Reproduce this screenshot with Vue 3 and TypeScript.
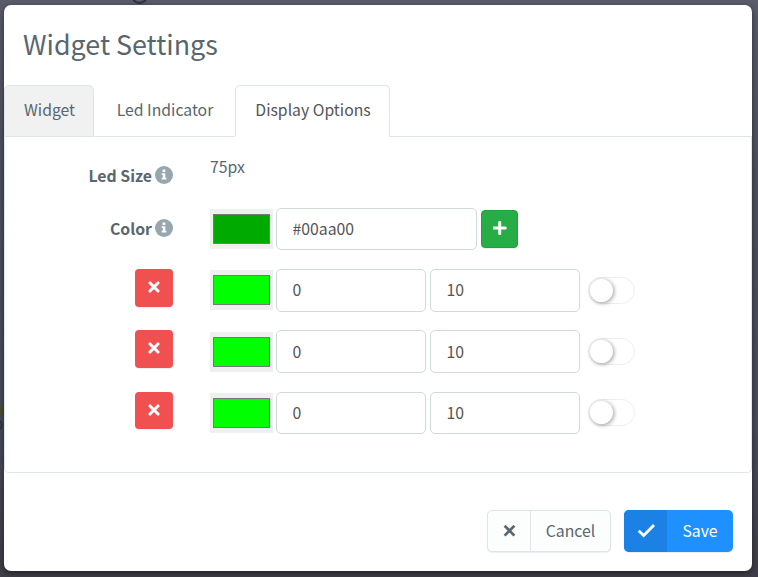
<script setup lang="ts">
import { ref } from 'vue'

interface Range {
  id: number
  color: string
  from: string
  to: string
  blink: boolean
}

const tabs = ['Widget', 'Led Indicator', 'Display Options']
const active = ref(2)
const color = ref('#00aa00')
const ranges = ref<Range[]>([
  { id: 1, color: '#00ff00', from: '0', to: '10', blink: false },
  { id: 2, color: '#00ff00', from: '0', to: '10', blink: false },
  { id: 3, color: '#00ff00', from: '0', to: '10', blink: false },
])

function addRange(): void {
  ranges.value.push({ id: Date.now(), color: '#00ff00', from: '0', to: '10', blink: false })
}

function removeRange(id: number): void {
  ranges.value = ranges.value.filter((r) => r.id !== id)
}
</script>

<template>
  <div class="backdrop">
    <span class="ghost-ring"></span>
    <span class="ghost-bar"></span>
    <span class="ghost-zero">0</span>
    <section class="modal">
      <h1 class="title">Widget Settings</h1>
      <nav class="tabs">
        <a
          v-for="(tab, i) in tabs"
          :key="tab"
          class="tab"
          :class="{ active: i === active, hovered: i === 0 }"
          @click="active = i"
        >{{ tab }}</a>
        <span class="tabs-rest"></span>
      </nav>
      <div class="panel">
        <div class="row row-size">
          <label class="label">
            <span class="label-text">Led Size</span>
            <svg class="info" viewBox="0 0 18 18">
              <circle cx="9" cy="9" r="9" fill="#98a6ad" />
              <path fill="#fff" d="M7.6 3.6h2.7v2.3H7.6zM6.7 7.2h3.6v4.5h1.1v1.9H6.7v-1.9h1.1V9H6.7z" />
            </svg>
          </label>
          <span class="value">75px</span>
        </div>
        <div class="row row-color">
          <label class="label">
            <span class="label-text">Color</span>
            <svg class="info" viewBox="0 0 18 18">
              <circle cx="9" cy="9" r="9" fill="#98a6ad" />
              <path fill="#fff" d="M7.6 3.6h2.7v2.3H7.6zM6.7 7.2h3.6v4.5h1.1v1.9H6.7v-1.9h1.1V9H6.7z" />
            </svg>
          </label>
          <div class="swatch"><span class="chip" :style="{ backgroundColor: color }"></span></div>
          <input v-model="color" class="field wide" type="text" />
          <button class="square add" @click="addRange">
            <svg width="14" height="14" viewBox="0 0 14 14">
              <path d="M6.7 1.4v11.2M1.1 7h11.2" stroke="#fff" stroke-width="3" stroke-linecap="round" />
            </svg>
          </button>
        </div>
        <div v-for="range in ranges" :key="range.id" class="row row-range">
          <div class="remove-cell">
            <button class="square remove" @click="removeRange(range.id)">
              <svg width="12" height="12" viewBox="0 0 12 12">
                <path d="M2 2l8 8M10 2l-8 8" stroke="#fff" stroke-width="3.1" stroke-linecap="round" />
              </svg>
            </button>
          </div>
          <div class="swatch"><span class="chip" :style="{ backgroundColor: range.color }"></span></div>
          <input v-model="range.from" class="field" type="text" />
          <input v-model="range.to" class="field" type="text" />
          <button class="toggle" :class="{ on: range.blink }" @click="range.blink = !range.blink">
            <span class="knob"></span>
          </button>
        </div>
      </div>
      <footer class="footer">
        <button class="action cancel">
          <span class="action-icon">
            <svg width="13" height="12" viewBox="0 0 13 12">
              <path d="M1.6 .8l9.8 9.8M11.4 .8l-9.8 9.8" stroke="#58666e" stroke-width="2.7" />
            </svg>
          </span>
          <span class="action-text">Cancel</span>
        </button>
        <button class="action save">
          <span class="action-icon">
            <svg width="18" height="14" viewBox="0 0 18 14">
              <path d="M1.7 6.8l5 4.7L17 1" fill="none" stroke="#fff" stroke-width="2.8" />
            </svg>
          </span>
          <span class="action-text">Save</span>
        </button>
      </footer>
    </section>
  </div>
</template>

<style>
body {
  margin: 0;
  overflow: hidden;
}
</style>

<style scoped>
.backdrop {
  position: relative;
  box-sizing: border-box;
  width: 758px;
  height: 577px;
  padding: 5px 6px 6px 4px;
  overflow: hidden;
  background: linear-gradient(#5b5c6b 0, #4d505f 30%, #484b59 75%, #403e48 100%);
  font-family: 'Noto Sans CJK SC', 'Noto Sans', sans-serif;
  color: #58666e;
}
.ghost-ring {
  position: absolute;
  left: 131px;
  top: -13px;
  width: 13px;
  height: 13px;
  border: 2px solid #30323f;
  border-radius: 50%;
}
.ghost-bar {
  position: absolute;
  left: 0;
  top: 405px;
  width: 4px;
  height: 10px;
  background: #4d4f33;
}
.ghost-zero {
  position: absolute;
  left: -5px;
  top: 414px;
  font-size: 14px;
  line-height: 20px;
  color: #2d2e3a;
}
.modal {
  position: relative;
  display: flex;
  flex-direction: column;
  height: 566px;
  border-radius: 7px;
  background: #fff;
  box-shadow: 0 2px 6px rgba(0, 0, 0, 0.5);
}
.title {
  box-sizing: border-box;
  height: 80px;
  margin: 0;
  padding: 19px 0 0 19px;
  font-size: 26.85px;
  font-weight: 400;
  line-height: 40px;
}
.tabs {
  display: flex;
  height: 52px;
}
.tab {
  box-sizing: border-box;
  border: 1px solid transparent;
  border-bottom-color: #dee5e7;
  border-radius: 5px 5px 0 0;
  padding-left: 1px;
  font-size: 15.75px;
  line-height: 47px;
  text-align: center;
  white-space: nowrap;
  cursor: pointer;
}
.tab:nth-child(1) {
  width: 90px;
}
.tab:nth-child(2) {
  width: 141px;
}
.tab:nth-child(3) {
  width: 155px;
}
.tab.hovered {
  border-color: #dee5e7;
  background: #f1f1f1;
}
.tab.active {
  border-color: #dee5e7;
  border-bottom-color: #fff;
  background: #fff;
  color: #555;
}
.tabs-rest {
  flex: 1;
  border-bottom: 1px solid #dee5e7;
}
.panel {
  box-sizing: border-box;
  height: 336px;
  border: 1px solid #dee5e7;
  border-top: 0;
  border-radius: 0 0 5px 5px;
  padding-top: 12px;
}
.row {
  display: flex;
  align-items: flex-start;
}
.row-size {
  height: 59px;
}
.row-color {
  height: 61px;
}
.row-range {
  height: 61.4px;
}
.label {
  display: flex;
  align-items: center;
  justify-content: flex-end;
  gap: 3px;
  width: 169px;
  height: 24px;
  margin: 14px 36px 0 -1px;
  font-size: 15.8px;
  font-weight: 700;
  line-height: 24px;
}
.label-text {
  padding-top: 2px;
}
.row-color .label {
  margin-top: 8px;
}
.info {
  width: 18px;
  height: 18px;
}
.value {
  margin-top: 6px;
  margin-left: 1px;
  font-size: 15.8px;
  line-height: 24px;
}
.swatch {
  box-sizing: border-box;
  width: 63px;
  height: 40px;
  margin: 1px 3px 0 1px;
  padding: 5px 3px;
  background: #efefef;
}
.chip {
  box-sizing: border-box;
  display: block;
  width: 57px;
  height: 30px;
  border: 1px solid #777;
}
.row-range .swatch {
  margin-top: 1.3px;
}
.field {
  box-sizing: border-box;
  width: 150px;
  height: 42.5px;
  margin: 0 4px 0 0;
  padding: 0 15px 1px 15.5px;
  border: 1px solid #cfdadd;
  border-radius: 5px;
  background: #fff;
  color: #555;
  font-family: inherit;
  font-size: 15.8px;
  outline: none;
}
.field.wide {
  width: 201px;
  height: 42px;
  padding-bottom: 2px;
}
.square {
  display: flex;
  align-items: center;
  justify-content: center;
  width: 38px;
  height: 37.6px;
  padding: 0 0 1px;
  border: 0;
  border-radius: 4px;
  box-shadow: 0 1px 1px rgba(90, 90, 90, 0.1);
}
.add {
  width: 37px;
  margin-top: 2px;
  border: 1px solid #23a03c;
  background: #27ad46;
}
.remove-cell {
  width: 74px;
  margin-left: 130px;
}
.remove {
  padding-bottom: 2px;
  background: #f05050;
}
.toggle {
  box-sizing: border-box;
  width: 47px;
  height: 27px;
  margin: 7.6px 0 0 4px;
  padding: 0 0 0 1px;
  border: 1px solid #eee;
  border-radius: 14px;
  background: #fff;
}
.toggle.on {
  background: #27c24c;
}
.knob {
  display: block;
  width: 23px;
  height: 23px;
  border-radius: 50%;
  background: #fff;
  box-shadow: 1px 1px 4px rgba(0, 0, 0, 0.4);
}
.footer {
  display: flex;
  justify-content: flex-end;
  gap: 13px;
  padding: 37px 19px 0 0;
}
.action {
  box-sizing: border-box;
  display: flex;
  height: 42px;
  padding: 0;
  overflow: hidden;
  border: 0;
  border-radius: 5px;
  font-family: inherit;
  font-size: 15.8px;
  box-shadow: 0 1px 1px rgba(90, 90, 90, 0.1);
}
.action-icon,
.action-text {
  display: flex;
  align-items: center;
  justify-content: center;
}
.cancel {
  width: 124px;
  border: 1px solid #dee5e7;
  background: #fcfdfd;
  color: #58666e;
}
.cancel .action-icon {
  width: 42px;
  border-right: 1px solid #dee5e7;
}
.action-text {
  flex: 1;
  padding-bottom: 2px;
}
.save {
  width: 109px;
  background: #1e90ff;
  color: #fff;
}
.save .action-icon {
  width: 43px;
  background: #1b81e5;
}
</style>
